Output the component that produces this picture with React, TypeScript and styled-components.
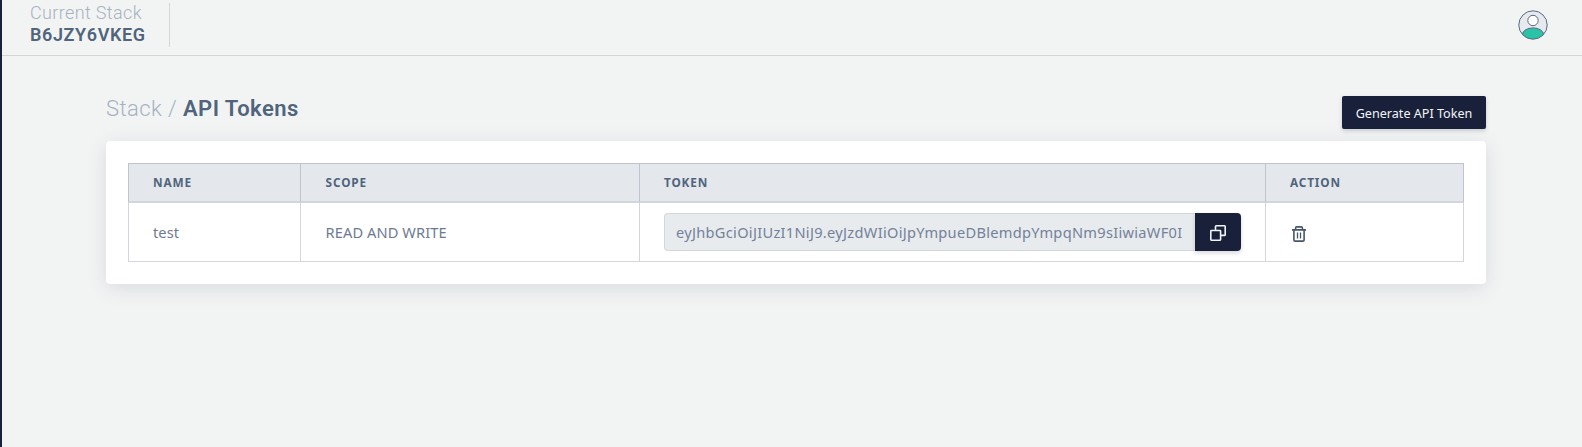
import React from "react";
import styled, { createGlobalStyle } from "styled-components";

const GlobalStyle = createGlobalStyle`
  *, *::before, *::after { box-sizing: border-box; }
  body {
    margin: 0;
    background: #f2f4f4;
    color: #6e7a91;
    font-family: "Noto Sans", "Open Sans", sans-serif;
    overflow: hidden;
  }
`;

const Page = styled.div`
  height: 447px;
  border-left: 2px solid #19213d;
`;

const Header = styled.header`
  display: flex;
  align-items: flex-start;
  justify-content: space-between;
  height: 56px;
  padding-right: 34px;
  border-bottom: 1px solid #d3d6d8;
`;

const StackInfo = styled.div`
  width: 168px;
  height: 44px;
  margin-top: 3px;
  padding-left: 28px;
  border-right: 1px solid #d3d6d8;
  font-family: Roboto, sans-serif;
  font-size: 18px;
  line-height: 22px;
  white-space: nowrap;
`;

const StackLabel = styled.div`
  margin-top: -1px;
  font-weight: 300;
  letter-spacing: 0.36px;
  color: #a8b1c2;
`;

const StackName = styled.div`
  font-weight: 600;
  letter-spacing: 0.62px;
  color: #50647c;
`;

const Avatar = styled.svg`
  display: block;
  width: 30px;
  height: 30px;
  margin-top: 10px;
`;

const Content = styled.main`
  width: 1380px;
  margin-left: 104px;
`;

const TitleBar = styled.div`
  display: flex;
  justify-content: space-between;
  height: 85px;
  padding-top: 40px;
`;

const Title = styled.h1`
  margin: 0;
  font-family: Roboto, sans-serif;
  font-size: 22px;
  line-height: 26px;
  font-weight: 300;
  letter-spacing: 0.42px;
  color: #a8b1c2;
`;

const TitleCurrent = styled.span`
  font-weight: 600;
  letter-spacing: 0.48px;
  color: #50647c;
`;

const Button = styled.button`
  display: flex;
  align-items: center;
  justify-content: center;
  border: 0;
  padding: 0;
  background: #19213a;
  color: #f2f4f8;
  box-shadow: 0 2px 4px rgba(25, 33, 58, 0.18);
`;

const GenerateButton = styled(Button)`
  width: 144px;
  height: 33px;
  border-radius: 2px;
  font-family: inherit;
  font-size: 12.6px;
  white-space: nowrap;
  padding-top: 2px;
`;

const Card = styled.section`
  height: 143px;
  padding: 22px;
  border-radius: 4px;
  background: #fff;
  box-shadow: 0 4px 20px rgba(34, 41, 68, 0.12);
`;

const Row = styled.div`
  display: grid;
  grid-template-columns: 172px 339px 626px 199px;
`;

const Cell = styled.div`
  display: flex;
  align-items: center;
  height: 59px;
  padding: 0 24px;
  border: solid #d3d6dc;
  border-width: 0 0 1px 1px;
  font-size: 14.6px;
  white-space: nowrap;
  &:nth-child(2) { padding-left: 24.6px; }
  &:last-child { border-right-width: 1px; }
`;

const HeadCell = styled(Cell)`
  height: 40px;
  padding-bottom: 2px;
  border-color: #bec3cd;
  border-width: 1px 0 2px 1px;
  border-bottom-color: #d3d6dc;
  background: #e4e7ec;
  color: #50647c;
  font-size: 11.8px;
  font-weight: 700;
  letter-spacing: 0.85px;
`;

const Text = styled.span<{ $spacing: number }>`
  letter-spacing: ${(p) => p.$spacing}px;
`;

const TokenField = styled.div`
  display: flex;
  width: 577px;
  height: 38px;
`;

const TokenValue = styled.div`
  width: 531px;
  height: 38px;
  padding: 0 11px;
  border: 1px solid #d3d8dd;
  border-right: 0;
  border-radius: 4px 0 0 4px;
  background: #e7ebed;
  color: #74819a;
  line-height: 36px;
`;

const TokenText = styled.div`
  overflow: hidden;
  letter-spacing: 0.3px;
`;

const CopyButton = styled(Button)`
  width: 46px;
  height: 38px;
  padding-top: 2px;
  border-radius: 0 4px 4px 0;
`;

const TrashButton = styled.button`
  display: flex;
  padding: 0;
  margin: 4px 0 0 2px;
  border: 0;
  background: none;
  color: #48566c;
`;

const CopyIcon = () => (
  <svg width="16" height="16" viewBox="0 0 16 16" fill="none" stroke="currentColor" strokeWidth="1.6" strokeLinejoin="round">
    <rect x="0.8" y="5.5" width="9.8" height="9.7" rx="0.6" />
    <path d="M5.5 5.2V1.5q0-.7.7-.7h8.3q.7 0 .7.7v8.2q0 .7-.7.7h-3.6" />
  </svg>
);

const TrashIcon = () => (
  <svg width="14" height="16" viewBox="0 0 14 16" fill="none" stroke="currentColor" strokeWidth="1.6">
    <path d="M0 3.9h14M3.6 3.7V2q0-1.1 1.1-1.1h4.6q1.1 0 1.1 1.1v1.7M1.9 4v10q0 1.1 1.1 1.1h8q1.1 0 1.1-1.1V4" />
    <path d="M5.5 6.5v6M8.5 6.5v6" strokeWidth="1.3" />
  </svg>
);

export default function App() {
  return (
    <Page>
      <GlobalStyle />
      <Header>
        <StackInfo>
          <StackLabel>Current Stack</StackLabel>
          <StackName>B6JZY6VKEG</StackName>
        </StackInfo>
        <Avatar viewBox="0 0 30 30" stroke="#5b6984">
          <clipPath id="avatar-disc"><circle cx="15" cy="15" r="14.2" /></clipPath>
          <circle cx="15" cy="15" r="14.2" fill="#e6e9ed" stroke="none" />
          <ellipse cx="15" cy="24.6" rx="10.6" ry="6.7" fill="#29c3a6" clipPath="url(#avatar-disc)" />
          <circle cx="15" cy="10.5" r="5.2" fill="#fff" />
          <circle cx="15" cy="15" r="14.2" fill="none" />
        </Avatar>
      </Header>
      <Content>
        <TitleBar>
          <Title>Stack / <TitleCurrent>API Tokens</TitleCurrent></Title>
          <GenerateButton>Generate API Token</GenerateButton>
        </TitleBar>
        <Card>
          <Row>
            <HeadCell>NAME</HeadCell>
            <HeadCell>SCOPE</HeadCell>
            <HeadCell>TOKEN</HeadCell>
            <HeadCell>ACTION</HeadCell>
          </Row>
          <Row>
            <Cell><Text $spacing={0.1}>test</Text></Cell>
            <Cell><Text $spacing={0.1}>READ AND WRITE</Text></Cell>
            <Cell>
              <TokenField>
                <TokenValue>
                  <TokenText>eyJhbGciOiJIUzI1NiJ9.eyJzdWIiOiJpYmpueDBlemdpYmpqNm9sIiwiaWF0I</TokenText>
                </TokenValue>
                <CopyButton aria-label="Copy"><CopyIcon /></CopyButton>
              </TokenField>
            </Cell>
            <Cell><TrashButton aria-label="Delete"><TrashIcon /></TrashButton></Cell>
          </Row>
        </Card>
      </Content>
    </Page>
  );
}
